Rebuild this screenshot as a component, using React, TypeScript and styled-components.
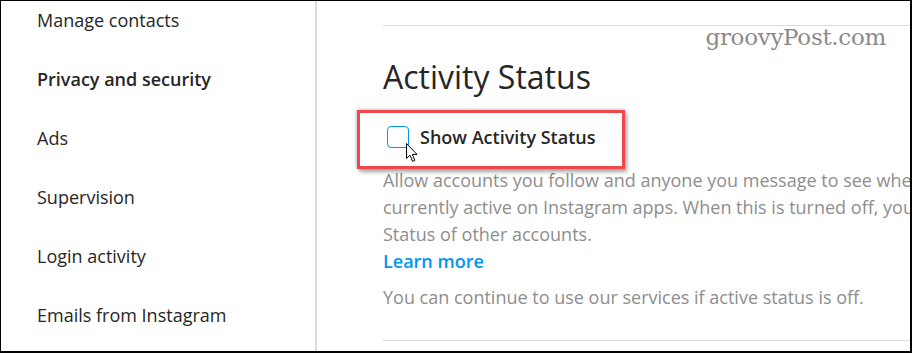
import * as React from "react";
import styled, { createGlobalStyle } from "styled-components";

const GlobalStyle = createGlobalStyle`
    html, body {
        margin: 0;
        padding: 0;
        background: #ffffff;
    }
    body {
        font-family: "Open Sans", "Noto Sans", sans-serif;
        color: #262626;
    }
`;

const Frame = styled.div`
    position: relative;
    box-sizing: border-box;
    width: 912px;
    height: 353px;
    display: flex;
    overflow: hidden;
    border-style: solid;
    border-color: #000000;
    border-width: 1px 2px 2px 1px;
    background: #ffffff;
`;

const Sidebar = styled.nav`
    flex: 0 0 316px;
    border-right: 2px solid #dbdbdb;
    padding: 7px 0 0 36px;
    box-sizing: border-box;
`;

const NavList = styled.ul`
    list-style: none;
    margin: 0;
    padding: 0;
    display: flex;
    flex-direction: column;
    gap: 35px;
`;

const NavItem = styled.li<{ $active?: boolean }>`
    height: 24px;
    line-height: 24px;
    font-size: 18px;
    font-weight: ${(p) => (p.$active ? 600 : 400)};
    color: #262626;
    white-space: nowrap;
`;

const Main = styled.main`
    position: relative;
    flex: 1;
    padding: 24px 0 0 66px;
    overflow: hidden;
`;

const Section = styled.section`
    border-top: 1px solid #dbdbdb;
    border-bottom: 1px solid #dbdbdb;
    height: 316px;
    box-sizing: border-box;
    padding-top: 31px;
`;

const Heading = styled.h2`
    margin: 0;
    font-size: 32px;
    font-weight: 400;
    line-height: 40px;
    color: #262626;
`;

const CheckRow = styled.label`
    display: flex;
    align-items: center;
    gap: 11px;
    margin: 29px 0 0 4px;
    height: 22px;
`;

const Box = styled.span`
    box-sizing: border-box;
    width: 22px;
    height: 22px;
    border: 1px solid #0095f6;
    border-radius: 4px;
    background: #ffffff;
`;

const CheckLabel = styled.span`
    font-size: 18px;
    font-weight: 600;
    color: #262626;
`;

const Description = styled.p`
    margin: 19px 0 0;
    font-size: 18px;
    line-height: 27px;
    color: #8e8e8e;
    white-space: nowrap;
`;

const LearnMore = styled.a`
    display: block;
    font-size: 18px;
    font-weight: 600;
    line-height: 27px;
    color: #0095f6;
    text-decoration: none;
`;

const Note = styled.p`
    margin: 9px 0 0;
    font-size: 18px;
    line-height: 27px;
    color: #8e8e8e;
    white-space: nowrap;
`;

const Highlight = styled.div`
    position: absolute;
    left: 40px;
    top: 109px;
    width: 262px;
    height: 53px;
    border: 3px solid #f0474b;
    box-shadow: 2px 3px 4px rgba(0, 0, 0, 0.35), -1px -1px 3px rgba(0, 0, 0, 0.2);
    pointer-events: none;
`;

const Watermark = styled.div`
    position: absolute;
    right: 24px;
    top: 23px;
    font-family: "DejaVu Serif", "Liberation Serif", serif;
    font-size: 23px;
    color: #8a8a8a;
    letter-spacing: -0.3px;
`;

const Cursor = styled.svg`
    position: absolute;
    left: 89px;
    top: 142px;
`;

const navItems = [
    "Manage contacts",
    "Privacy and security",
    "Ads",
    "Supervision",
    "Login activity",
    "Emails from Instagram",
];

export default function App() {
    return (
        <>
            <GlobalStyle />
            <Frame>
                <Sidebar>
                    <NavList>
                        {navItems.map((item) => (
                            <NavItem key={item} $active={item === "Privacy and security"}>
                                {item}
                            </NavItem>
                        ))}
                    </NavList>
                </Sidebar>
                <Main>
                    <Section>
                        <Heading>Activity Status</Heading>
                        <CheckRow>
                            <Box />
                            <CheckLabel>Show Activity Status</CheckLabel>
                        </CheckRow>
                        <Description>
                            Allow accounts you follow and anyone you message to see when you were last active or are
                            <br />
                            currently active on Instagram apps. When this is turned off, you won't be able to see the Activity
                            <br />
                            Status of other accounts.
                        </Description>
                        <LearnMore href="#">Learn more</LearnMore>
                        <Note>You can continue to use our services if active status is off.</Note>
                    </Section>
                    <Highlight />
                    <Cursor width="12" height="20" viewBox="0 0 12 20">
                        <path
                            d="M0.5 0.5 L0.5 15.5 L4 12.2 L6.6 18.4 L8.8 17.4 L6.3 11.4 L11 11.4 Z"
                            fill="#ffffff"
                            stroke="#000000"
                            strokeWidth="1"
                            strokeLinejoin="round"
                        />
                    </Cursor>
                    <Watermark>groovyPost.com</Watermark>
                </Main>
            </Frame>
        </>
    );
}
